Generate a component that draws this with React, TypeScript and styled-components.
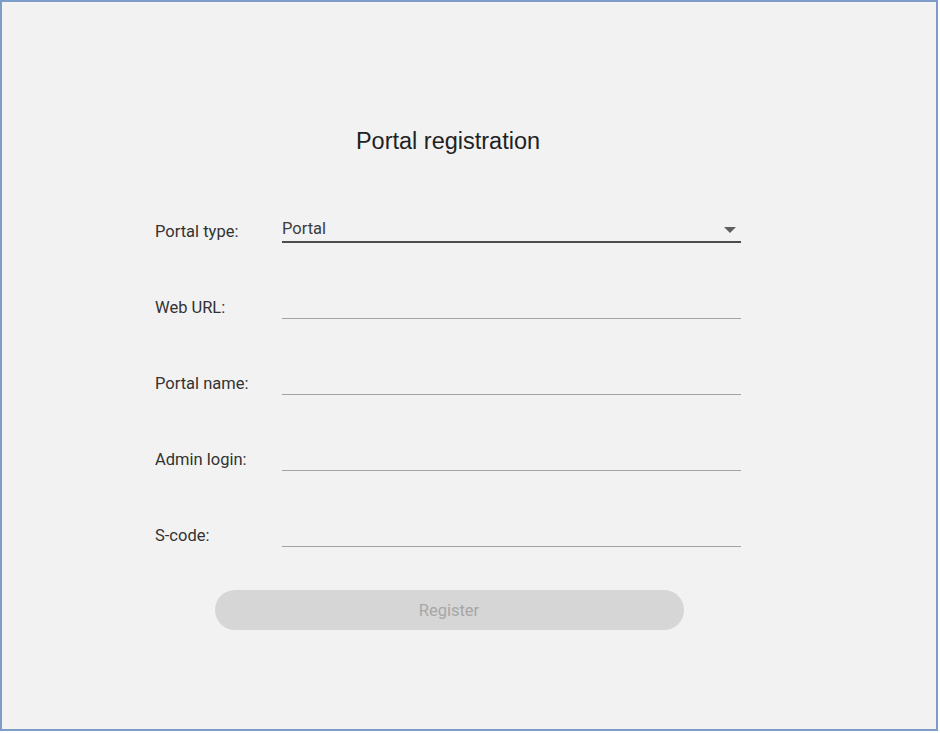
import React from 'react';
import styled, { createGlobalStyle } from 'styled-components';

const GlobalStyle = createGlobalStyle`
  html, body {
    margin: 0;
    padding: 0;
    background: #ffffff;
  }
  body {
    font-family: Roboto, "Liberation Sans", Arial, sans-serif;
  }
`;

const Frame = styled.div`
  box-sizing: border-box;
  width: 938px;
  height: 731px;
  border: 2px solid #7d9dc8;
  background-color: #f2f2f2;
  padding: 124px 0 0 153px;
`;

const Form = styled.div`
  width: 586px;
  display: flex;
  flex-direction: column;
  align-items: center;
`;

const Title = styled.h1`
  margin: 0;
  font-family: "Liberation Sans", Arial, sans-serif;
  font-size: 23.5px;
  line-height: 30px;
  font-weight: 400;
  color: #222;
`;

const Fields = styled.div`
  align-self: stretch;
  display: flex;
  flex-direction: column;
  gap: 28px;
  margin-top: 39px;
`;

const Row = styled.div`
  height: 48px;
  display: grid;
  grid-template-columns: 127px 459px;
  align-items: end;
`;

const Label = styled.label`
  font-size: 16.5px;
  line-height: 20px;
  padding-bottom: 1px;
  color: #333;
`;

type FieldProps = {
  $active?: boolean;
};

const Field = styled.div<FieldProps>`
  box-sizing: border-box;
  height: 29px;
  border-bottom: ${(p) => (p.$active ? '2px solid #4d4d4d' : '1px solid #a3a3a3')};
  font-size: 16.5px;
  line-height: 30px;
  color: #3c3c3c;
  display: flex;
  align-items: flex-start;
  justify-content: space-between;
`;

const Arrow = styled.svg`
  width: 12px;
  height: 6px;
  margin: 13px 5px 0 0;
`;

const RegisterButton = styled.button`
  margin-top: 43px;
  margin-left: 2px;
  width: 469px;
  height: 40px;
  border: none;
  border-radius: 20px;
  background-color: #d6d6d6;
  color: #a6a6a6;
  font-family: Roboto, "Liberation Sans", Arial, sans-serif;
  font-size: 16.5px;
  cursor: default;
`;

const fields = ['Web URL:', 'Portal name:', 'Admin login:', 'S-code:'];

export default function App() {
  return (
    <>
      <GlobalStyle />
      <Frame>
        <Form>
          <Title>Portal registration</Title>
          <Fields>
            <Row>
              <Label>Portal type:</Label>
              <Field $active>
                <span>Portal</span>
                <Arrow viewBox="0 0 12 6">
                  <polygon points="0,0 12,0 6,6" fill="#5f5f5f" />
                </Arrow>
              </Field>
            </Row>
            {fields.map((f) => (
              <Row key={f}>
                <Label>{f}</Label>
                <Field />
              </Row>
            ))}
          </Fields>
          <RegisterButton disabled>Register</RegisterButton>
        </Form>
      </Frame>
    </>
  );
}
